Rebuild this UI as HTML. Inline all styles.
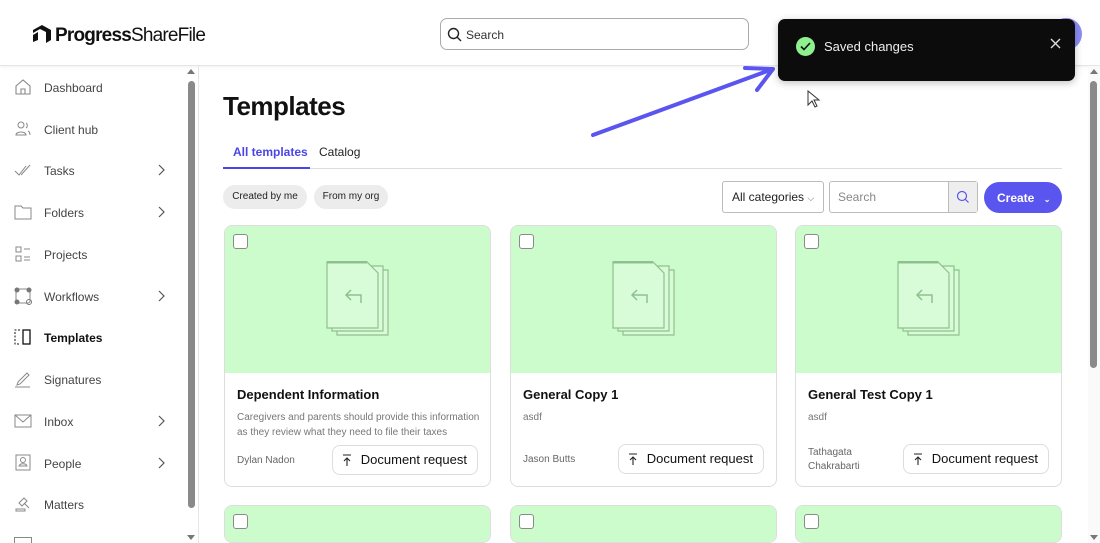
<!DOCTYPE html>
<html style="width:1100px;height:543px;overflow:hidden"><head><meta charset="utf-8"><style>
*{box-sizing:border-box;margin:0;padding:0}
body{width:1100px;height:543px;overflow:hidden;background:#fff;font-family:"Liberation Sans",sans-serif;color:#222;position:relative}
.abs{position:absolute}
.hdr{left:0;top:0;width:1100px;height:66px;border-bottom:1px solid #e6e6e6;box-shadow:0 1px 3px rgba(0,0,0,.06)}
.nav{left:0;height:20px;width:180px;font-size:12px;color:#444}
.nav .ic{position:absolute;left:14px;top:0;width:18px;height:18px}
.nav .t{position:absolute;left:44px;top:3px}
.nav .ch{position:absolute;left:158px;top:3px}
.card{width:267px;height:262px;border:1px solid #ddd;border-radius:8px;overflow:hidden;background:#fff}
.card .g{height:147px;background:#ccfbcc;position:relative}
.cb{position:absolute;left:8px;top:8px;width:15px;height:15px;border:1px solid #8a8a8a;border-radius:3px;background:#fff}
.card h3{position:absolute;left:12px;top:161px;font-size:13px;font-weight:bold;color:#111}
.card .d{position:absolute;left:12px;top:184px;font-size:10px;color:#777;line-height:15px;width:245px}
.card .a{position:absolute;left:12px;font-size:10px;color:#666;line-height:14px}
.btn{position:absolute;right:12px;top:219px;height:30px;border:1px solid #ddd;border-radius:8px;font-size:13px;color:#111;padding:6px 10px 0 28px}
.btn svg{position:absolute;left:9px;top:8px}
.chip{height:24px;border-radius:12px;background:#ececec;font-size:10px;color:#222;line-height:24px;text-align:center}
</style></head><body>
<div class="abs hdr"></div>
<svg class="abs" style="left:31px;top:22px" width="22" height="22" viewBox="0 0 22 22"><path d="M2 8l9-5 9 5v10l-5 3V10L9 7 2 11z" fill="#111"/><path d="M2 13l5-3v8l-5 2z" fill="#111"/></svg>
<div class="abs" style="left:55px;top:25px;font-size:19px;color:#111;letter-spacing:-0.8px"><span style="font-weight:bold">Progress</span><span style="font-weight:normal">ShareFile</span></div>
<div class="abs" style="left:440px;top:18px;width:309px;height:32px;border:1px solid #aaa;border-radius:7px"></div>
<svg class="abs" style="left:447px;top:27px" width="15" height="15" viewBox="0 0 15 15"><circle cx="6.5" cy="6.5" r="5" fill="none" stroke="#222" stroke-width="1.4"/><path d="M10 10l4 4" stroke="#222" stroke-width="1.4"/></svg>
<div class="abs" style="left:466px;top:28px;font-size:12px;color:#333">Search</div>
<div class="abs" style="left:1050px;top:18px;width:32px;height:32px;border-radius:50%;background:#8c8cf5"></div>

<div class="abs" style="left:198px;top:66px;width:1px;height:477px;background:#e6e6e6"></div>
<div class="abs" style="left:187px;top:69px;width:0;height:0;border:4px solid transparent;border-bottom:5px solid #777;border-top:0"></div>
<div class="abs" style="left:188px;top:81px;width:7px;height:427px;background:#8a8a8a;border-radius:4px"></div>
<div class="abs" style="left:187px;top:535px;width:0;height:0;border:4px solid transparent;border-top:5px solid #777;border-bottom:0"></div>

<div class="abs nav" style="top:78px"><svg class="ic" viewBox="0 0 18 18"><path d="M2 8l7-6 7 6v8H2z M7 16v-5h4v5" fill="none" stroke="#888" stroke-width="1.1"/></svg><span class="t">Dashboard</span></div>
<div class="abs nav" style="top:120px"><svg class="ic" viewBox="0 0 18 18"><circle cx="7" cy="5" r="3" fill="none" stroke="#888"/><path d="M2 15c0-4 10-4 10 0z M12 3a3 3 0 0 1 0 5 M14 11c2 1 2 3 2 4" fill="none" stroke="#888"/></svg><span class="t">Client hub</span></div>
<div class="abs nav" style="top:161px"><svg class="ic" viewBox="0 0 18 18"><path d="M1 10l4 4 7-9 M7 14l9-10" fill="none" stroke="#888"/></svg><span class="t">Tasks</span><svg class="ch" width="8" height="12" viewBox="0 0 8 12"><path d="M1 1l5 5-5 5" fill="none" stroke="#555" stroke-width="1.2"/></svg></div>
<div class="abs nav" style="top:203px"><svg class="ic" viewBox="0 0 18 18"><path d="M1 3h6l2 2h8v11H1z" fill="none" stroke="#888"/></svg><span class="t">Folders</span><svg class="ch" width="8" height="12" viewBox="0 0 8 12"><path d="M1 1l5 5-5 5" fill="none" stroke="#555" stroke-width="1.2"/></svg></div>
<div class="abs nav" style="top:245px"><svg class="ic" viewBox="0 0 18 18"><rect x="2" y="2" width="5" height="5" fill="none" stroke="#888"/><rect x="2" y="11" width="5" height="5" fill="none" stroke="#888"/><path d="M10 4h6M10 12h6M10 15h6" stroke="#888"/></svg><span class="t">Projects</span></div>
<div class="abs nav" style="top:287px"><svg class="ic" viewBox="0 0 18 18"><rect x="2" y="2" width="14" height="14" rx="2" fill="none" stroke="#888"/><circle cx="3" cy="3" r="2.5" fill="#777"/><circle cx="15" cy="3" r="2.5" fill="#777"/><circle cx="3" cy="15" r="2.5" fill="#777"/><circle cx="15" cy="15" r="2.5" fill="none" stroke="#777"/></svg><span class="t">Workflows</span><svg class="ch" width="8" height="12" viewBox="0 0 8 12"><path d="M1 1l5 5-5 5" fill="none" stroke="#555" stroke-width="1.2"/></svg></div>
<div class="abs nav" style="top:328px;color:#111;font-weight:bold"><svg class="ic" viewBox="0 0 18 18"><path d="M6 2H1v14h5" fill="none" stroke="#111" stroke-dasharray="2 1.5"/><rect x="9" y="2" width="7" height="14" fill="none" stroke="#111" stroke-width="1.3"/></svg><span class="t">Templates</span></div>
<div class="abs nav" style="top:370px"><svg class="ic" viewBox="0 0 18 18"><path d="M4 12l9-9 2 2-9 9-3 1z M1 17h15" fill="none" stroke="#888"/></svg><span class="t">Signatures</span></div>
<div class="abs nav" style="top:412px"><svg class="ic" viewBox="0 0 18 18"><rect x="1" y="3" width="16" height="12" fill="none" stroke="#888"/><path d="M1 3l8 7 8-7" fill="none" stroke="#888"/></svg><span class="t">Inbox</span><svg class="ch" width="8" height="12" viewBox="0 0 8 12"><path d="M1 1l5 5-5 5" fill="none" stroke="#555" stroke-width="1.2"/></svg></div>
<div class="abs nav" style="top:454px"><svg class="ic" viewBox="0 0 18 18"><rect x="2" y="1" width="14" height="15" fill="none" stroke="#888"/><circle cx="9" cy="6" r="2.5" fill="none" stroke="#888"/><path d="M5 12c1-3 7-3 8 0z" fill="none" stroke="#888"/></svg><span class="t">People</span><svg class="ch" width="8" height="12" viewBox="0 0 8 12"><path d="M1 1l5 5-5 5" fill="none" stroke="#555" stroke-width="1.2"/></svg></div>
<div class="abs nav" style="top:495px"><svg class="ic" viewBox="0 0 18 18"><path d="M5 8l5-5 3 3-5 5z M10 8l5 5 M2 16h9v-2H2z" fill="none" stroke="#888"/></svg><span class="t">Matters</span></div>
<div class="abs" style="left:14px;top:537px;width:18px;height:8px;border:1px solid #888"></div>

<div class="abs" style="left:223px;top:91px;font-size:26px;font-weight:bold;color:#111;letter-spacing:-0.5px">Templates</div>
<div class="abs" style="left:233px;top:145px;font-size:12px;font-weight:bold;color:#4b45e8">All templates</div>
<div class="abs" style="left:319px;top:145px;font-size:12px;color:#222">Catalog</div>
<div class="abs" style="left:223px;top:168px;width:839px;height:1px;background:#ddd"></div>
<div class="abs" style="left:223px;top:167px;width:87px;height:2px;background:#4b45e8"></div>
<div class="abs chip" style="left:223px;top:185px;width:84px">Created by me</div>
<div class="abs chip" style="left:314px;top:185px;width:74px">From my org</div>
<div class="abs" style="left:722px;top:181px;width:102px;height:32px;border:1px solid #bbb;border-radius:3px;font-size:12px;color:#222;padding:8px 0 0 9px">All categories <span style="font-size:9px;color:#666">⌵</span></div>
<div class="abs" style="left:829px;top:181px;width:149px;height:32px;border:1px solid #bbb;border-radius:3px"></div>
<div class="abs" style="left:838px;top:190px;font-size:12px;color:#888">Search</div>
<div class="abs" style="left:948px;top:182px;width:29px;height:30px;background:#eee;border-left:1px solid #bbb"></div>
<svg class="abs" style="left:956px;top:190px" width="14" height="14" viewBox="0 0 14 14"><circle cx="6" cy="6" r="4.5" fill="none" stroke="#5a55ee" stroke-width="1.2"/><path d="M9.5 9.5l3 3" stroke="#5a55ee" stroke-width="1.2"/></svg>
<div class="abs" style="left:984px;top:182px;width:78px;height:31px;border-radius:16px;background:#5b55f0;color:#fff;font-size:12px;font-weight:bold;padding:9px 0 0 13px">Create <span style="font-size:8px;margin-left:6px">⌄</span></div>

<div class="abs card" style="left:224px;top:225px"><div class="g"><div class="cb"></div><svg style="position:absolute;left:101px;top:35px" width="64" height="76" viewBox="0 0 64 76"><g fill="#d8fbd8" stroke="#8fc08f" stroke-width="1.2"><path d="M11 9h51v65H11z"/><path d="M6 5h51v65H6z"/><path d="M1 1h40l11 11v55H1z"/></g><path d="M1 1h40" stroke="#8fc08f" stroke-width="3"/><path d="M35 42v-8H20 M25 29l-5 5 5 5" fill="none" stroke="#8fc08f" stroke-width="1.5"/></svg></div>
<h3>Dependent Information</h3><div class="d">Caregivers and parents should provide this information as they review what they need to file their taxes</div><div class="a" style="top:228px">Dylan Nadon</div><div class="btn"><svg width="10" height="12" viewBox="0 0 10 12"><path d="M1 1h8M5 4v8M2 7l3-3 3 3" fill="none" stroke="#222" stroke-width="1.1"/></svg>Document request</div></div>

<div class="abs card" style="left:510px;top:225px"><div class="g"><div class="cb"></div><svg style="position:absolute;left:101px;top:35px" width="64" height="76" viewBox="0 0 64 76"><g fill="#d8fbd8" stroke="#8fc08f" stroke-width="1.2"><path d="M11 9h51v65H11z"/><path d="M6 5h51v65H6z"/><path d="M1 1h40l11 11v55H1z"/></g><path d="M1 1h40" stroke="#8fc08f" stroke-width="3"/><path d="M35 42v-8H20 M25 29l-5 5 5 5" fill="none" stroke="#8fc08f" stroke-width="1.5"/></svg></div>
<h3>General Copy 1</h3><div class="d">asdf</div><div class="a" style="top:227px">Jason Butts</div><div class="btn" style="top:218px"><svg width="10" height="12" viewBox="0 0 10 12"><path d="M1 1h8M5 4v8M2 7l3-3 3 3" fill="none" stroke="#222" stroke-width="1.1"/></svg>Document request</div></div>

<div class="abs card" style="left:795px;top:225px"><div class="g"><div class="cb"></div><svg style="position:absolute;left:101px;top:35px" width="64" height="76" viewBox="0 0 64 76"><g fill="#d8fbd8" stroke="#8fc08f" stroke-width="1.2"><path d="M11 9h51v65H11z"/><path d="M6 5h51v65H6z"/><path d="M1 1h40l11 11v55H1z"/></g><path d="M1 1h40" stroke="#8fc08f" stroke-width="3"/><path d="M35 42v-8H20 M25 29l-5 5 5 5" fill="none" stroke="#8fc08f" stroke-width="1.5"/></svg></div>
<h3>General Test Copy 1</h3><div class="d">asdf</div><div class="a" style="top:220px">Tathagata<br>Chakrabarti</div><div class="btn" style="top:218px"><svg width="10" height="12" viewBox="0 0 10 12"><path d="M1 1h8M5 4v8M2 7l3-3 3 3" fill="none" stroke="#222" stroke-width="1.1"/></svg>Document request</div></div>

<div class="abs card" style="left:224px;top:505px;height:38px"><div class="g"><div class="cb"></div></div></div>
<div class="abs card" style="left:510px;top:505px;height:38px"><div class="g"><div class="cb"></div></div></div>
<div class="abs card" style="left:795px;top:505px;height:38px"><div class="g"><div class="cb"></div></div></div>

<div class="abs" style="left:1088px;top:66px;width:12px;height:477px;background:#fafafa"></div>
<div class="abs" style="left:1090px;top:69px;width:0;height:0;border:4px solid transparent;border-bottom:5px solid #777;border-top:0"></div>
<div class="abs" style="left:1090px;top:81px;width:7px;height:287px;background:#8a8a8a;border-radius:4px"></div>
<div class="abs" style="left:1090px;top:535px;width:0;height:0;border:4px solid transparent;border-top:5px solid #777;border-bottom:0"></div>

<svg class="abs" style="left:585px;top:60px" width="200" height="80" viewBox="0 0 200 80"><path d="M8 75L185 10" stroke="#5b55f0" stroke-width="4" stroke-linecap="round"/><path d="M160 8L188 9 172 30" fill="none" stroke="#5b55f0" stroke-width="4" stroke-linecap="round" stroke-linejoin="round"/></svg>

<div class="abs" style="left:778px;top:19px;width:297px;height:62px;background:#0c0c0c;border-radius:7px;box-shadow:0 2px 8px rgba(0,0,0,.25)"></div>
<div class="abs" style="left:796px;top:37px;width:19px;height:19px;border-radius:50%;background:#8ef08e"></div>
<svg class="abs" style="left:800px;top:42px" width="11" height="9" viewBox="0 0 11 9"><path d="M1 4.5l3 3L10 1" fill="none" stroke="#111" stroke-width="1.6"/></svg>
<div class="abs" style="left:824px;top:39px;font-size:13px;color:#eee">Saved changes</div>
<svg class="abs" style="left:1050px;top:38px" width="11" height="11" viewBox="0 0 11 11"><path d="M1 1l9 9M10 1l-9 9" stroke="#ddd" stroke-width="1.4"/></svg>
<svg class="abs" style="left:807px;top:90px" width="14" height="18" viewBox="0 0 14 18"><path d="M1 1v14l4-4 3 6 2-1-3-6h5z" fill="#fff" stroke="#333" stroke-width="1"/></svg>
</body></html>
